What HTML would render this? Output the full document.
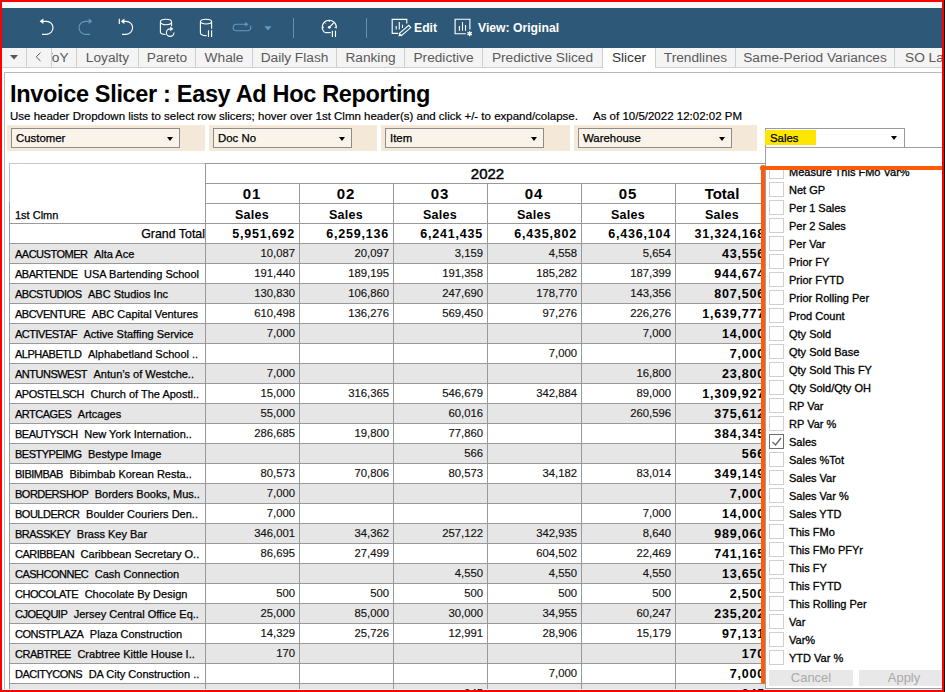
<!DOCTYPE html><html><head><meta charset="utf-8"><title>Invoice Slicer</title><style>*{margin:0;padding:0;box-sizing:border-box}
html,body{width:945px;height:692px;overflow:hidden;background:#fff;font-family:"Liberation Sans",sans-serif;position:relative}
div,span,i{position:absolute;display:block;font-style:normal}
.red{background:#ff0000;z-index:50}
.topstrip{left:0;top:0;width:945px;height:8px;background:#f9f9f9}
.toolbar{left:0;top:8px;width:945px;height:40px;background:#2d5877}
.toolbar svg{position:absolute}
.tbtxt{color:#fff;font-weight:bold;font-size:12.2px;line-height:14px;top:13px;white-space:nowrap}
.tabbar{left:0;top:48px;width:945px;height:20px;background:#f4f4f4;border-bottom:1px solid #cfcfcf}
.tab{top:0;height:19px;border-right:1px solid #cfcfcf;background:#f4f4f4;overflow:hidden}
.tab span{position:static;display:block;text-align:center;font-size:13.7px;line-height:20px;color:#5a5a5a;white-space:nowrap}
.tab.act{background:#fff;height:20px}
.tab.act span{color:#333}
.content{left:4px;top:72px;width:945px;height:700px;border-left:1px solid #b8b8b8;border-top:1px solid #b8b8b8;background:#fff}
.content>div{}
.title{left:10px;top:80.6px;font-size:23.5px;letter-spacing:-0.33px;font-weight:bold;line-height:26px;color:#000;white-space:nowrap}
.sub{left:10px;top:109px;font-size:11.5px;line-height:14px;color:#000;-webkit-text-stroke:0.2px #000;white-space:nowrap}
.asof{left:593px;top:109px;font-size:11.5px;line-height:14px;color:#000;-webkit-text-stroke:0.2px #000;white-space:nowrap}
.strip{top:125px;height:26px;background:#f4e9d8}
.dd{top:128px;height:20px;background:#faf3ea;border:1px solid #8c8c8c}
.dd span{left:4px;top:2px;font-size:11.4px;line-height:14px;color:#000;-webkit-text-stroke:0.25px #000;white-space:nowrap}
.arr{top:7.5px;width:0;height:0;border-left:3.5px solid transparent;border-right:3.5px solid transparent;border-top:4.5px solid #000}
.tbl{left:-4px;top:-72px;width:945px;height:692px}
.hl{height:1px;background:#999;z-index:3}
.vl{width:1px;background:#999;z-index:3}
.band{left:10px;width:760px;height:20px;background:#e6e6e6;z-index:1}
.hdr{text-align:center;color:#000;z-index:4;white-space:nowrap}
.yr{font-size:15px;line-height:19px;-webkit-text-stroke:0.45px #000}
.mo{font-size:15px;font-weight:bold;line-height:19px;letter-spacing:1px}
.sl{font-size:12.5px;font-weight:bold;line-height:19px;letter-spacing:0.3px}
.clmn{left:15px;top:207.5px;font-size:11px;line-height:14px;color:#000;-webkit-text-stroke:0.25px #000;z-index:4}
.gt{left:100px;width:105px;top:227px;text-align:right;font-size:12.4px;line-height:14px;color:#000;-webkit-text-stroke:0.25px #000;z-index:4}
.num{width:94px;padding-right:4px;text-align:right;font-size:11.3px;line-height:19px;color:#111;-webkit-text-stroke:0.15px #111;z-index:4;white-space:nowrap}
.num.b{margin-top:1px;font-weight:bold;font-size:12.5px;letter-spacing:0.8px;color:#000;padding-right:4px;-webkit-text-stroke:0}
.rh{left:15px;height:19px;z-index:4;white-space:nowrap;font-size:11px;line-height:19px;color:#000;-webkit-text-stroke:0.25px #000}
.rh span{position:static;display:inline}
.rh .cd{letter-spacing:-0.5px}
.rh .nm{margin-left:6.5px}
.sdd{left:765px;top:128px;width:140px;height:20px;background:#fff;border:1px solid #9a9a9a;border-bottom:none;z-index:10}
.sdd .hi{left:-1px;top:1px;width:51px;height:15px;background:#ffe600;font-size:11.4px;line-height:17px;padding-left:5px;color:#000;-webkit-text-stroke:0.25px #000}
.sdd .arr{top:7px}
.panel{left:765px;top:147px;width:190px;height:542px;background:#fff;border:1px solid #a0a0a0;z-index:10;overflow:hidden}
.list{left:0;top:22px;width:190px;height:496px;overflow:hidden}
.it{left:0;height:18px;width:180px}
.cb{left:3px;top:1px;width:15px;height:15px;border:1px solid #cfcfcf;background:#fff}
.cb.chk{border-color:#6e6e6e}
.it span{left:23px;top:2px;font-size:11px;line-height:14px;color:#000;-webkit-text-stroke:0.3px #000;white-space:nowrap}
.btn{top:522px;height:16px;background:#e8e8e8;color:#aaa;font-size:13px;line-height:16px;text-align:center}
.orange{left:761px;top:166px;width:190px;height:518px;border-left:4px solid #fe5b0a;border-top:4px solid #fe5b0a;z-index:20;border-bottom-left-radius:2px}
.ocap{left:760px;top:165px;width:6px;height:6px;border-radius:3px;background:#fe5b0a;z-index:21}

.ob{background:#bdbdbd;z-index:3}
</style></head><body>
<div class="topstrip"></div>
<div class="toolbar">
<svg style="left:36px;top:8px" width="20" height="22" viewBox="0 0 20 22"><path d="M6.5 5.3H10.5A6.5 6.5 0 0 1 10.5 18.3H6" fill="none" stroke="#fff" stroke-width="1.15"/><path d="M3.6 5.3L7.4 2.5V8.1Z" fill="#fff"/></svg>
<svg style="left:76px;top:8px" width="20" height="22" viewBox="0 0 20 22"><path d="M12.5 5.3H9.5A6.5 6.5 0 0 0 9.5 18.3H14" fill="none" stroke="#6499c0" stroke-width="1.15"/><path d="M16.4 5.3L12.6 2.5V8.1Z" fill="#6499c0"/></svg>
<svg style="left:115px;top:8px" width="20" height="22" viewBox="0 0 20 22"><path d="M4.3 2.8V7.9" stroke="#fff" stroke-width="1.15"/><path d="M8.5 5.3H11.1A6.5 6.5 0 0 1 11.1 18.3H7" fill="none" stroke="#fff" stroke-width="1.15"/><path d="M5.8 5.3L9.4 2.5V8.1Z" fill="#fff"/></svg>
<svg style="left:157px;top:8px" width="22" height="22" viewBox="0 0 22 22"><ellipse cx="9" cy="6" rx="5.6" ry="2.7" fill="none" stroke="#fff" stroke-width="1.1"/><path d="M3.4 6V16.5A5.6 2.6 0 0 0 8.6 18.5" fill="none" stroke="#fff" stroke-width="1.1"/><path d="M14.6 6V10.2" fill="none" stroke="#fff" stroke-width="1.1"/><path d="M13.2 12.8A3.8 3.8 0 1 0 17 16.6" fill="none" stroke="#fff" stroke-width="1.15"/><path d="M13.2 10.4L16.4 12.8L13.2 15.2Z" fill="#fff"/></svg>
<svg style="left:197px;top:8px" width="20" height="22" viewBox="0 0 20 22"><ellipse cx="9" cy="5.6" rx="5.6" ry="2.4" fill="none" stroke="#fff" stroke-width="1.1"/><path d="M3.4 5.6V17A5.6 2.6 0 0 0 9.6 19.6" fill="none" stroke="#fff" stroke-width="1.1"/><path d="M14.6 5.6V12.8" fill="none" stroke="#fff" stroke-width="1.1"/><path d="M11.5 14.2V21M14.6 14.2V21" stroke="#fff" stroke-width="1.15"/></svg>
<svg style="left:231px;top:8px" width="24" height="22" viewBox="0 0 24 22"><path d="M16 8.3H5.3A3.2 3.2 0 0 0 5.3 14.7H16.7A3.2 3.2 0 0 0 19.4 9.8" fill="none" stroke="#6499c0" stroke-width="1.1"/><path d="M14.2 6L17.6 8.3L14.2 10.6Z" fill="#6499c0"/></svg>
<svg style="left:263px;top:17px" width="10" height="7"><path d="M1.3 1.2H8.6L4.95 5.5Z" fill="#6499c0"/></svg>
<div style="left:293px;top:10px;width:1px;height:20px;background:#5f93ba"></div>
<svg style="left:320px;top:9px" width="20" height="22" viewBox="0 0 20 22"><path d="M4.4 15.3A7 7 0 1 1 16.2 11.4" fill="none" stroke="#fff" stroke-width="1.15"/><path d="M4.6 15.6H10.8" stroke="#fff" stroke-width="1.15"/><path d="M9.3 10.3L13.6 6" stroke="#fff" stroke-width="1.15"/><circle cx="9.3" cy="10.3" r="1.4" fill="#fff"/><path d="M9.3 3.3V5M2.3 10.3H4M14.6 10.3H16.3M4.4 5.4L5.5 6.5" stroke="#fff" stroke-width="1"/><path d="M12.4 13.7V20M15.5 13.7V20" stroke="#fff" stroke-width="1.15"/></svg>
<div style="left:366px;top:10px;width:1px;height:20px;background:#5f93ba"></div>
<svg style="left:390px;top:9px" width="24" height="22" viewBox="0 0 24 22"><path d="M8 16.4H2.2V2.4H16.8V6.5" fill="none" stroke="#fff" stroke-width="1.15"/><path d="M6.2 12.6V9M9.3 12.6V5M12.5 11V7.8" stroke="#fff" stroke-width="1.1"/><path d="M9.32 16.43L18.79 8.28L20.75 10.56L11.28 18.71Z" fill="none" stroke="#fff" stroke-width="1.1"/><path d="M8.4 19.4L9.1 16.6L11.3 18.6Z" fill="#fff"/></svg>
<div class="tbtxt" style="left:414px">Edit</div>
<svg style="left:453px;top:9px" width="24" height="22" viewBox="0 0 24 22"><path d="M12.8 16.7H2.1V2.2H16.9V12.6" fill="none" stroke="#fff" stroke-width="1.15"/><path d="M6.4 13.8V9M9.5 13.8V5M12.5 13.8V8.1" stroke="#fff" stroke-width="1.1"/><path d="M16.6 14.2V19.2M14.4 15.4L18.8 18M14.4 18L18.8 15.4" stroke="#fff" stroke-width="1.3"/></svg>
<div class="tbtxt" style="left:478px">View: Original</div>
</div>

<div class="tabbar">
<div class="tab tdd" style="left:2px;width:25px"><svg width="10" height="6" style="position:absolute;left:7.8px;top:6.8px"><path d="M0 0H8L4 4.6Z" fill="#555"/></svg></div>
<div class="tab" style="left:27px;width:25px"><svg width="8" height="12" style="position:absolute;left:8px;top:4px"><path d="M5.5 0.6L1.2 4.8L5.5 9" fill="none" stroke="#555" stroke-width="1"/></svg></div>
<div class="tab" style="left:52px;width:25px"><span style="position:absolute;left:-8px;top:0">YoY</span></div>
<div class="tab" style="left:77px;width:62px"><span>Loyalty</span></div>
<div class="tab" style="left:139px;width:57px"><span>Pareto</span></div>
<div class="tab" style="left:196px;width:57px"><span>Whale</span></div>
<div class="tab" style="left:253px;width:84px"><span>Daily Flash</span></div>
<div class="tab" style="left:337px;width:68px"><span>Ranking</span></div>
<div class="tab" style="left:405px;width:78px"><span>Predictive</span></div>
<div class="tab" style="left:483px;width:120px"><span>Predictive Sliced</span></div>
<div class="tab act" style="left:603px;width:53px"><span>Slicer</span></div>
<div class="tab" style="left:656px;width:80px"><span>Trendlines</span></div>
<div class="tab" style="left:736px;width:159px"><span>Same-Period Variances</span></div>
<div class="tab" style="left:895px;width:65px"><span style="position:absolute;left:10px;top:0">SO Lates</span></div>
</div>
<div class="content"></div>
<div class="title">Invoice Slicer : Easy Ad Hoc Reporting</div>
<div class="sub">Use header Dropdown lists to select row slicers; hover over 1st Clmn header(s) and click +/- to expand/colapse.</div>
<div class="asof">As of 10/5/2022 12:02:02 PM</div>
<div class="strip" style="left:7px;width:198px"></div>
<div class="dd" style="left:11px;width:169px"><span>Customer</span><i class="arr" style="left:155px"></i></div>
<div class="strip" style="left:209px;width:168px"></div>
<div class="dd" style="left:213px;width:139px"><span>Doc No</span><i class="arr" style="left:125px"></i></div>
<div class="strip" style="left:381px;width:189px"></div>
<div class="dd" style="left:385px;width:159px"><span>Item</span><i class="arr" style="left:145px"></i></div>
<div class="strip" style="left:574px;width:183px"></div>
<div class="dd" style="left:578px;width:154px"><span>Warehouse</span><i class="arr" style="left:140px"></i></div>
<div class="hl ob" style="left:9px;top:163px;width:196px;background:#c8c8c8"></div><div class="hl" style="left:205px;top:163px;width:565px"></div><div class="vl ob" style="left:9px;top:163px;height:39px"></div><div class="vl" style="left:9px;top:202px;height:500px"></div><div class="hl" style="left:205px;top:183px;width:565px"></div><div class="hl" style="left:205px;top:203px;width:565px"></div><div class="hl hdb" style="left:10px;top:223px;width:760px"></div><div class="vl" style="left:205px;top:163px;height:540px"></div><div class="hdr yr" style="left:205px;top:164px;width:565px">2022</div><div class="hdr mo" style="left:205px;top:184px;width:94px">01</div><div class="hdr sl" style="left:205px;top:206px;width:94px">Sales</div><div class="vl" style="left:299px;top:183px;height:520px"></div><div class="hdr mo" style="left:299px;top:184px;width:94px">02</div><div class="hdr sl" style="left:299px;top:206px;width:94px">Sales</div><div class="vl" style="left:393px;top:183px;height:520px"></div><div class="hdr mo" style="left:393px;top:184px;width:94px">03</div><div class="hdr sl" style="left:393px;top:206px;width:94px">Sales</div><div class="vl" style="left:487px;top:183px;height:520px"></div><div class="hdr mo" style="left:487px;top:184px;width:94px">04</div><div class="hdr sl" style="left:487px;top:206px;width:94px">Sales</div><div class="vl" style="left:581px;top:183px;height:520px"></div><div class="hdr mo" style="left:581px;top:184px;width:94px">05</div><div class="hdr sl" style="left:581px;top:206px;width:94px">Sales</div><div class="vl" style="left:675px;top:183px;height:520px"></div><div class="hdr mo" style="left:675px;top:184px;width:94px;letter-spacing:0">Total</div><div class="hdr sl" style="left:675px;top:206px;width:94px">Sales</div><div class="clmn">1st Clmn</div><div class="gt">Grand Total</div><div class="num b" style="left:205px;top:224px">5,951,692</div><div class="num b" style="left:299px;top:224px">6,259,136</div><div class="num b" style="left:393px;top:224px">6,241,435</div><div class="num b" style="left:487px;top:224px">6,435,802</div><div class="num b" style="left:581px;top:224px">6,436,104</div><div class="num b" style="left:675px;top:224px">31,324,168</div><div class="band" style="top:243px"></div><div class="hl" style="left:10px;top:243px;width:760px"></div><div class="rh" style="top:245px"><span class="cd">AACUSTOMER</span><span class="nm">Alta Ace</span></div><div class="num" style="left:205px;top:244px">10,087</div><div class="num" style="left:299px;top:244px">20,097</div><div class="num" style="left:393px;top:244px">3,159</div><div class="num" style="left:487px;top:244px">4,558</div><div class="num" style="left:581px;top:244px">5,654</div><div class="num b" style="left:675px;top:244px">43,556</div><div class="hl" style="left:10px;top:263px;width:760px"></div><div class="rh" style="top:265px"><span class="cd">ABARTENDE</span><span class="nm">USA Bartending School</span></div><div class="num" style="left:205px;top:264px">191,440</div><div class="num" style="left:299px;top:264px">189,195</div><div class="num" style="left:393px;top:264px">191,358</div><div class="num" style="left:487px;top:264px">185,282</div><div class="num" style="left:581px;top:264px">187,399</div><div class="num b" style="left:675px;top:264px">944,674</div><div class="band" style="top:283px"></div><div class="hl" style="left:10px;top:283px;width:760px"></div><div class="rh" style="top:285px"><span class="cd">ABCSTUDIOS</span><span class="nm">ABC Studios Inc</span></div><div class="num" style="left:205px;top:284px">130,830</div><div class="num" style="left:299px;top:284px">106,860</div><div class="num" style="left:393px;top:284px">247,690</div><div class="num" style="left:487px;top:284px">178,770</div><div class="num" style="left:581px;top:284px">143,356</div><div class="num b" style="left:675px;top:284px">807,506</div><div class="hl" style="left:10px;top:303px;width:760px"></div><div class="rh" style="top:305px"><span class="cd">ABCVENTURE</span><span class="nm">ABC Capital Ventures</span></div><div class="num" style="left:205px;top:304px">610,498</div><div class="num" style="left:299px;top:304px">136,276</div><div class="num" style="left:393px;top:304px">569,450</div><div class="num" style="left:487px;top:304px">97,276</div><div class="num" style="left:581px;top:304px">226,276</div><div class="num b" style="left:675px;top:304px">1,639,777</div><div class="band" style="top:323px"></div><div class="hl" style="left:10px;top:323px;width:760px"></div><div class="rh" style="top:325px"><span class="cd">ACTIVESTAF</span><span class="nm">Active Staffing Service</span></div><div class="num" style="left:205px;top:324px">7,000</div><div class="num" style="left:581px;top:324px">7,000</div><div class="num b" style="left:675px;top:324px">14,000</div><div class="hl" style="left:10px;top:343px;width:760px"></div><div class="rh" style="top:345px"><span class="cd">ALPHABETLD</span><span class="nm">Alphabetland School ..</span></div><div class="num" style="left:487px;top:344px">7,000</div><div class="num b" style="left:675px;top:344px">7,000</div><div class="band" style="top:363px"></div><div class="hl" style="left:10px;top:363px;width:760px"></div><div class="rh" style="top:365px"><span class="cd">ANTUNSWEST</span><span class="nm">Antun’s of Westche..</span></div><div class="num" style="left:205px;top:364px">7,000</div><div class="num" style="left:581px;top:364px">16,800</div><div class="num b" style="left:675px;top:364px">23,800</div><div class="hl" style="left:10px;top:383px;width:760px"></div><div class="rh" style="top:385px"><span class="cd">APOSTELSCH</span><span class="nm">Church of The Apostl..</span></div><div class="num" style="left:205px;top:384px">15,000</div><div class="num" style="left:299px;top:384px">316,365</div><div class="num" style="left:393px;top:384px">546,679</div><div class="num" style="left:487px;top:384px">342,884</div><div class="num" style="left:581px;top:384px">89,000</div><div class="num b" style="left:675px;top:384px">1,309,927</div><div class="band" style="top:403px"></div><div class="hl" style="left:10px;top:403px;width:760px"></div><div class="rh" style="top:405px"><span class="cd">ARTCAGES</span><span class="nm">Artcages</span></div><div class="num" style="left:205px;top:404px">55,000</div><div class="num" style="left:393px;top:404px">60,016</div><div class="num" style="left:581px;top:404px">260,596</div><div class="num b" style="left:675px;top:404px">375,612</div><div class="hl" style="left:10px;top:423px;width:760px"></div><div class="rh" style="top:425px"><span class="cd">BEAUTYSCH</span><span class="nm">New York Internation..</span></div><div class="num" style="left:205px;top:424px">286,685</div><div class="num" style="left:299px;top:424px">19,800</div><div class="num" style="left:393px;top:424px">77,860</div><div class="num b" style="left:675px;top:424px">384,345</div><div class="band" style="top:443px"></div><div class="hl" style="left:10px;top:443px;width:760px"></div><div class="rh" style="top:445px"><span class="cd">BESTYPEIMG</span><span class="nm">Bestype Image</span></div><div class="num" style="left:393px;top:444px">566</div><div class="num b" style="left:675px;top:444px">566</div><div class="hl" style="left:10px;top:463px;width:760px"></div><div class="rh" style="top:465px"><span class="cd">BIBIMBAB</span><span class="nm">Bibimbab Korean Resta..</span></div><div class="num" style="left:205px;top:464px">80,573</div><div class="num" style="left:299px;top:464px">70,806</div><div class="num" style="left:393px;top:464px">80,573</div><div class="num" style="left:487px;top:464px">34,182</div><div class="num" style="left:581px;top:464px">83,014</div><div class="num b" style="left:675px;top:464px">349,149</div><div class="band" style="top:483px"></div><div class="hl" style="left:10px;top:483px;width:760px"></div><div class="rh" style="top:485px"><span class="cd">BORDERSHOP</span><span class="nm">Borders Books, Mus..</span></div><div class="num" style="left:205px;top:484px">7,000</div><div class="num b" style="left:675px;top:484px">7,000</div><div class="hl" style="left:10px;top:503px;width:760px"></div><div class="rh" style="top:505px"><span class="cd">BOULDERCR</span><span class="nm">Boulder Couriers Den..</span></div><div class="num" style="left:205px;top:504px">7,000</div><div class="num" style="left:581px;top:504px">7,000</div><div class="num b" style="left:675px;top:504px">14,000</div><div class="band" style="top:523px"></div><div class="hl" style="left:10px;top:523px;width:760px"></div><div class="rh" style="top:525px"><span class="cd">BRASSKEY</span><span class="nm">Brass Key Bar</span></div><div class="num" style="left:205px;top:524px">346,001</div><div class="num" style="left:299px;top:524px">34,362</div><div class="num" style="left:393px;top:524px">257,122</div><div class="num" style="left:487px;top:524px">342,935</div><div class="num" style="left:581px;top:524px">8,640</div><div class="num b" style="left:675px;top:524px">989,060</div><div class="hl" style="left:10px;top:543px;width:760px"></div><div class="rh" style="top:545px"><span class="cd">CARIBBEAN</span><span class="nm">Caribbean Secretary O..</span></div><div class="num" style="left:205px;top:544px">86,695</div><div class="num" style="left:299px;top:544px">27,499</div><div class="num" style="left:487px;top:544px">604,502</div><div class="num" style="left:581px;top:544px">22,469</div><div class="num b" style="left:675px;top:544px">741,165</div><div class="band" style="top:563px"></div><div class="hl" style="left:10px;top:563px;width:760px"></div><div class="rh" style="top:565px"><span class="cd">CASHCONNEC</span><span class="nm">Cash Connection</span></div><div class="num" style="left:393px;top:564px">4,550</div><div class="num" style="left:487px;top:564px">4,550</div><div class="num" style="left:581px;top:564px">4,550</div><div class="num b" style="left:675px;top:564px">13,650</div><div class="hl" style="left:10px;top:583px;width:760px"></div><div class="rh" style="top:585px"><span class="cd">CHOCOLATE</span><span class="nm">Chocolate By Design</span></div><div class="num" style="left:205px;top:584px">500</div><div class="num" style="left:299px;top:584px">500</div><div class="num" style="left:393px;top:584px">500</div><div class="num" style="left:487px;top:584px">500</div><div class="num" style="left:581px;top:584px">500</div><div class="num b" style="left:675px;top:584px">2,500</div><div class="band" style="top:603px"></div><div class="hl" style="left:10px;top:603px;width:760px"></div><div class="rh" style="top:605px"><span class="cd">CJOEQUIP</span><span class="nm">Jersey Central Office Eq..</span></div><div class="num" style="left:205px;top:604px">25,000</div><div class="num" style="left:299px;top:604px">85,000</div><div class="num" style="left:393px;top:604px">30,000</div><div class="num" style="left:487px;top:604px">34,955</div><div class="num" style="left:581px;top:604px">60,247</div><div class="num b" style="left:675px;top:604px">235,202</div><div class="hl" style="left:10px;top:623px;width:760px"></div><div class="rh" style="top:625px"><span class="cd">CONSTPLAZA</span><span class="nm">Plaza Construction</span></div><div class="num" style="left:205px;top:624px">14,329</div><div class="num" style="left:299px;top:624px">25,726</div><div class="num" style="left:393px;top:624px">12,991</div><div class="num" style="left:487px;top:624px">28,906</div><div class="num" style="left:581px;top:624px">15,179</div><div class="num b" style="left:675px;top:624px">97,131</div><div class="band" style="top:643px"></div><div class="hl" style="left:10px;top:643px;width:760px"></div><div class="rh" style="top:645px"><span class="cd">CRABTREE</span><span class="nm">Crabtree Kittle House I..</span></div><div class="num" style="left:205px;top:644px">170</div><div class="num b" style="left:675px;top:644px">170</div><div class="hl" style="left:10px;top:663px;width:760px"></div><div class="rh" style="top:665px"><span class="cd">DACITYCONS</span><span class="nm">DA City Construction ..</span></div><div class="num" style="left:487px;top:664px">7,000</div><div class="num b" style="left:675px;top:664px">7,000</div><div class="band" style="top:683px"></div><div class="hl" style="left:10px;top:683px;width:760px"></div><div class="rh" style="top:685px"><span class="cd">DAISY</span><span class="nm">Daisy</span></div><div class="num" style="left:393px;top:684px">945</div><div class="num b" style="left:675px;top:684px">945</div>
<div class="sdd"><span class="hi">Sales</span><i class="arr" style="left:125px"></i></div><div class="panel"><div class="list"><div class="it" style="top:-7px"><i class="cb"></i><span>Measure This FMo Var%</span></div><div class="it" style="top:11px"><i class="cb"></i><span>Net GP</span></div><div class="it" style="top:29px"><i class="cb"></i><span>Per 1 Sales</span></div><div class="it" style="top:47px"><i class="cb"></i><span>Per 2 Sales</span></div><div class="it" style="top:65px"><i class="cb"></i><span>Per Var</span></div><div class="it" style="top:83px"><i class="cb"></i><span>Prior FY</span></div><div class="it" style="top:101px"><i class="cb"></i><span>Prior FYTD</span></div><div class="it" style="top:119px"><i class="cb"></i><span>Prior Rolling Per</span></div><div class="it" style="top:137px"><i class="cb"></i><span>Prod Count</span></div><div class="it" style="top:155px"><i class="cb"></i><span>Qty Sold</span></div><div class="it" style="top:173px"><i class="cb"></i><span>Qty Sold Base</span></div><div class="it" style="top:191px"><i class="cb"></i><span>Qty Sold This FY</span></div><div class="it" style="top:209px"><i class="cb"></i><span>Qty Sold/Qty OH</span></div><div class="it" style="top:227px"><i class="cb"></i><span>RP Var</span></div><div class="it" style="top:245px"><i class="cb"></i><span>RP Var %</span></div><div class="it" style="top:263px"><i class="cb chk"><svg width="13" height="13" style="position:absolute;left:0;top:0"><path d="M2.5 7L5.5 10L11 3" fill="none" stroke="#666" stroke-width="1.3"/></svg></i><span>Sales</span></div><div class="it" style="top:281px"><i class="cb"></i><span>Sales %Tot</span></div><div class="it" style="top:299px"><i class="cb"></i><span>Sales Var</span></div><div class="it" style="top:317px"><i class="cb"></i><span>Sales Var %</span></div><div class="it" style="top:335px"><i class="cb"></i><span>Sales YTD</span></div><div class="it" style="top:353px"><i class="cb"></i><span>This FMo</span></div><div class="it" style="top:371px"><i class="cb"></i><span>This FMo PFYr</span></div><div class="it" style="top:389px"><i class="cb"></i><span>This FY</span></div><div class="it" style="top:407px"><i class="cb"></i><span>This FYTD</span></div><div class="it" style="top:425px"><i class="cb"></i><span>This Rolling Per</span></div><div class="it" style="top:443px"><i class="cb"></i><span>Var</span></div><div class="it" style="top:461px"><i class="cb"></i><span>Var%</span></div><div class="it" style="top:479px"><i class="cb"></i><span>YTD Var %</span></div></div><div class="btn" style="left:3px;width:84px">Cancel</div><div class="btn" style="left:93px;width:90px">Apply</div></div><div class="orange"></div><div class="ocap"></div>
<div style="left:0;top:689px;width:945px;height:1px;background:#f4fbfb;z-index:3"></div><div class="red" style="left:0;top:0;width:945px;height:2px"></div><div class="red" style="left:0;top:0;width:2px;height:692px"></div><div class="red" style="left:942px;top:0;width:2px;height:692px"></div><div class="red" style="left:944px;top:0;width:1px;height:692px;background:#000"></div><div class="red" style="left:0;top:690px;width:944px;height:2px"></div>
</body></html>
